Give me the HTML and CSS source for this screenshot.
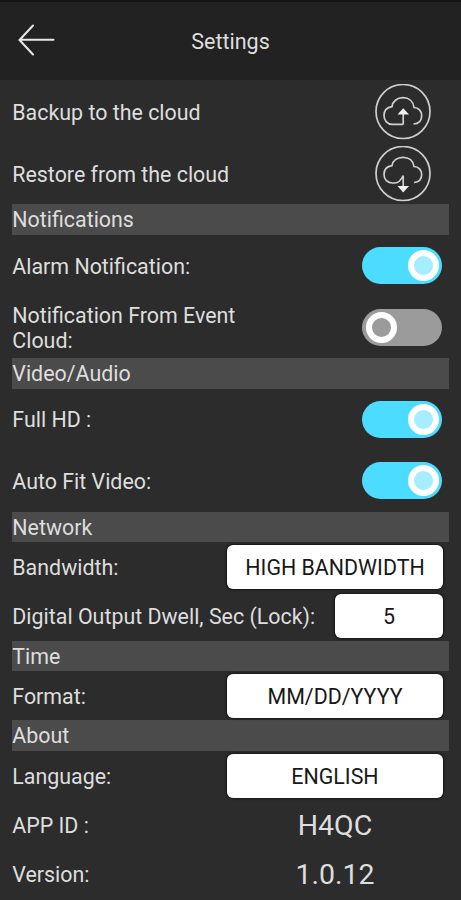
FILE: index.html
```html
<!DOCTYPE html>
<html lang="en">
<head>
<meta charset="utf-8">
<title>Settings</title>
<link rel="stylesheet" href="styles.css">
</head>
<body>
<header class="topbar">
  <svg class="back" viewBox="0 0 40 36" width="40" height="36"><path d="M16 2.500 2.500 17 16 31.500M3 16.700H36.500"/></svg>
  <h1>Settings</h1>
</header>
<main>
  <div class="row tall"><span class="label">Backup to the cloud</span>
    <svg class="cloud" viewBox="0 0 56 56" width="56" height="56"><circle cx="28" cy="27.500" r="27"/><path d="M28.200 40.400H17.500C12.500 40.400 9 36.500 9 31.500C9 26.500 12 23.300 17 22.600C17.500 17.500 22 13.700 28 13.700C34 13.700 38.300 17.500 39 23.500C43.500 23.500 46.700 27 46.700 31.500C46.700 36.500 44 39.800 38.500 40M28.200 40.400V29"/><path class="tip" d="M22.500 30.500 28.200 24.200 34 30.500Z"/></svg>
  </div>
  <div class="row tall"><span class="label">Restore from the cloud</span>
    <svg class="cloud" viewBox="0 0 56 56" width="56" height="56"><circle cx="28" cy="27.500" r="27"/><path d="M28.200 29.500C26.500 33 24 37 20 37H17.500C12.500 37 9 33.500 9 28.500C9 23.500 12 20.300 17 19.600C17.500 14.800 22 11.300 28 11.300C34 11.300 38.300 14.800 39 20.500C43.500 20.500 46.700 24 46.700 28.500C46.700 33 44 36 39 36.500M28.200 29.500V42"/><path class="tip" d="M22.500 40 28.200 46.500 34 40Z"/></svg>
  </div>
  <h2>Notifications</h2>
  <div class="row tall"><span class="label">Alarm Notification:</span><span class="toggle on"></span></div>
  <div class="row tall"><span class="label">Notification From Event<br>Cloud:</span><span class="toggle"></span></div>
  <h2>Video/Audio</h2>
  <div class="row tall"><span class="label">Full HD :</span><span class="toggle on"></span></div>
  <div class="row tall"><span class="label">Auto Fit Video:</span><span class="toggle on"></span></div>
  <h2>Network</h2>
  <div class="row"><span class="label">Bandwidth:</span><button>HIGH BANDWIDTH</button></div>
  <div class="row"><span class="label">Digital Output Dwell, Sec (Lock):</span><button class="small">5</button></div>
  <h2>Time</h2>
  <div class="row"><span class="label">Format:</span><button>MM/DD/YYYY</button></div>
  <h2>About</h2>
  <div class="row"><span class="label">Language:</span><button>ENGLISH</button></div>
  <div class="row"><span class="label">APP ID :</span><span class="value">H4QC</span></div>
  <div class="row"><span class="label">Version:</span><span class="value">1.0.12</span></div>
</main>
</body>
</html>
```
FILE: styles.css
```css
*, *::before { box-sizing: border-box; }
body {
  margin: 0;
  height: 900px;
  overflow: hidden;
  background: #2c2c2c;
  color: #dedede;
  font: 21.4px/25px Roboto, sans-serif;
}
.topbar {
  display: grid;
  grid-template-columns: 60px 1fr 60px;
  align-items: center;
  height: 80px;
  border-top: 2px solid #151515;
  background: #222;
}
.back { margin-left: 17px; fill: none; stroke: #e8e8e8; stroke-width: 2; stroke-linecap: round; }
h1 { margin: 0; text-align: center; font-size: 21.5px; font-weight: 400; }
main { padding: 1.3px 12.500px 0 12.300px; }
h2 {
  margin: 0;
  height: 30.700px;
  font-size: 21.4px;
  line-height: 32px;
  font-weight: 400;
  background: #4b4b4b;
}
.row {
  display: flex;
  align-items: center;
  justify-content: space-between;
  height: 49.100px;
  padding-right: 5.500px;
}
.tall { height: 61.500px; }
.label { padding-top: 1px; white-space: nowrap; }
.cloud { margin-right: 12.500px; fill: none; stroke: #cfcfcf; stroke-width: 1.7; }
.tip { fill: #f2f2f2; stroke: none; }
.toggle {
  display: flex;
  align-items: center;
  width: 80px;
  height: 37px;
  margin-right: 1px;
  padding: 0 3px 0 4px;
  border-radius: 19px;
  background: #9b9b9b;
}
.toggle::before {
  content: "";
  width: 31px;
  height: 31px;
  border: 6.500px solid #fff;
  border-radius: 50%;
  background: #9b9b9b;
}
.toggle.on { justify-content: flex-end; background: #4bdcff; }
.toggle.on::before { background: #a5edff; }
button {
  width: 216px;
  height: 44px;
  padding: 0;
  border: 0;
  border-radius: 6px;
  background: #fff;
  box-shadow: 0 0 2px 1px #151515;
  color: #181818;
  font: 21.4px/45px Roboto, sans-serif;
}
.small { width: 108px; }
.value { width: 216px; padding-top: 2px; text-align: center; font-size: 28.500px; line-height: 34px; }
```
